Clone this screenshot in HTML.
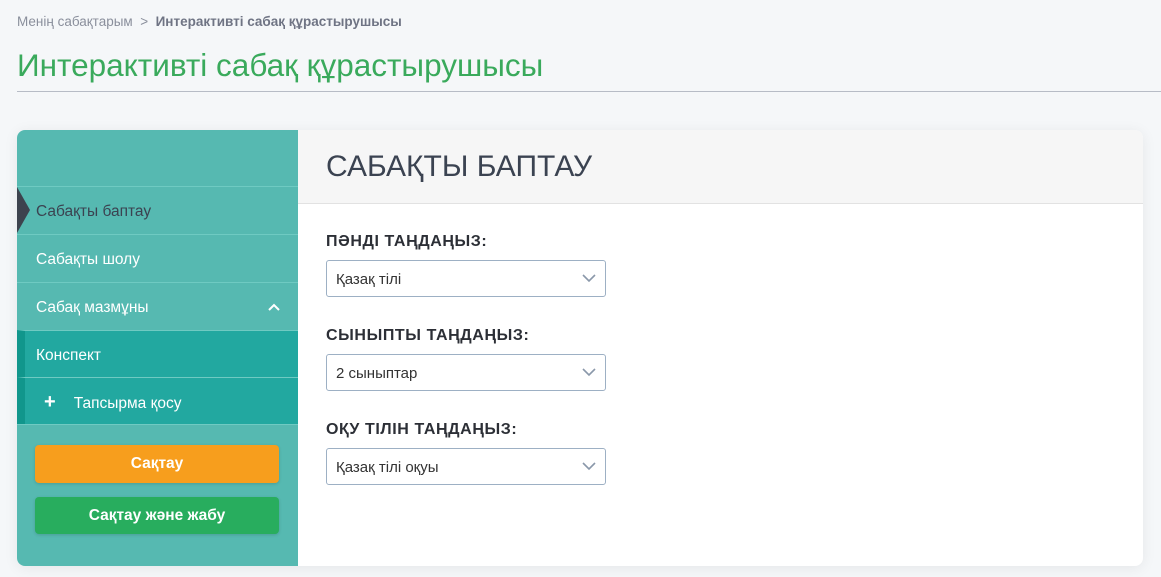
<!DOCTYPE html>
<html><head><meta charset="utf-8"><style>
body{margin:0;width:1161px;height:577px;background:#f5f7f9;font-family:"Liberation Sans","DejaVu Sans",sans-serif;position:relative;overflow:hidden}
.bc{position:absolute;left:17px;top:14px;font-size:13.5px;color:#8a8f9c}
.bc b{color:#6f7484}
h1{position:absolute;left:17px;top:47px;margin:0;font-weight:normal;font-size:31.5px;color:#3aaa5c}
.rule{position:absolute;left:17px;right:0;top:91px;border-top:1px solid #b7bcc6}
.card{position:absolute;left:17px;top:130px;width:1126px;height:436px;border-radius:8px;overflow:hidden;background:#fff;box-shadow:0 2px 14px rgba(0,0,0,.07)}
.side{position:absolute;left:0;top:0;width:281px;height:436px;background:#56b9b1}
.it{position:absolute;left:0;width:281px;height:47px;border-top:1px solid #6fcac2;color:#fff;font-size:15.5px;line-height:49px;padding-left:19px;box-sizing:border-box}
.sub{background:#22a8a0;border-left:8px solid #11968c;padding-left:11px}
.btn{position:absolute;left:18px;width:244px;border-radius:4px;color:#fff;font-weight:bold;font-size:15.5px;text-align:center;box-shadow:0 1px 3px rgba(0,0,0,.15)}
.main{position:absolute;left:281px;top:0;right:0;bottom:0}
.hd{height:73px;background:#f6f6f6;border-bottom:1px solid #e2e2e2;font-size:30px;color:#3b4351;line-height:73px;padding-left:28px}
.lb{position:absolute;left:28px;font-weight:bold;font-size:16px;letter-spacing:0.6px;color:#2c2f36}
.sel{position:absolute;left:28px;width:280px;height:37px;border:1px solid #9db0c4;border-radius:3px;box-sizing:border-box;font-size:15px;color:#333;line-height:38px;padding-left:9px;background:#fff}
.sel svg{position:absolute;right:9px;top:13px}
</style></head><body>
<div class="bc">Менің сабақтарым &nbsp;&gt;&nbsp; <b>Интерактивті сабақ құрастырушысы</b></div>
<h1>Интерактивті сабақ құрастырушысы</h1>
<div class="rule"></div>
<div class="card">
<div class="side">
<div class="it" style="top:56px;color:#3b4351">Сабақты баптау</div>
<div style="position:absolute;left:0;top:57px;width:0;height:0;border-top:23px solid transparent;border-bottom:23px solid transparent;border-left:13px solid #3d434e"></div>
<div class="it" style="top:104px">Сабақты шолу</div>
<div class="it" style="top:152px">Сабақ мазмұны<svg style="position:absolute;right:18px;top:20px" width="12" height="8"><path d="M1 7L6 2L11 7" stroke="#fff" stroke-width="2" fill="none"/></svg></div>
<div class="it sub" style="top:200px">Конспект</div>
<div class="it sub" style="top:247px"><span style="font-size:20px;font-weight:bold;margin:0 18px 0 8px">+</span>Тапсырма қосу</div>
<div style="position:absolute;left:0;top:294px;width:281px;border-top:1px solid #6fcac2"></div>
<div class="btn" style="top:315px;height:38px;line-height:38px;background:#f79e1d">Сақтау</div>
<div class="btn" style="top:367px;height:37px;line-height:37px;background:#28ad5e">Сақтау және жабу</div>
</div>
<div class="main">
<div class="hd">САБАҚТЫ БАПТАУ</div>
<div class="lb" style="top:103px">ПӘНДІ ТАҢДАҢЫЗ:</div>
<div class="sel" style="top:130px">Қазақ тілі<svg width="14" height="9"><path d="M1 1L7 7L13 1" stroke="#8a98aa" stroke-width="1.6" fill="none"/></svg></div>
<div class="lb" style="top:197px">СЫНЫПТЫ ТАҢДАҢЫЗ:</div>
<div class="sel" style="top:224px">2 сыныптар<svg width="14" height="9"><path d="M1 1L7 7L13 1" stroke="#8a98aa" stroke-width="1.6" fill="none"/></svg></div>
<div class="lb" style="top:291px">ОҚУ ТІЛІН ТАҢДАҢЫЗ:</div>
<div class="sel" style="top:318px">Қазақ тілі оқуы<svg width="14" height="9"><path d="M1 1L7 7L13 1" stroke="#8a98aa" stroke-width="1.6" fill="none"/></svg></div>
</div>
</div>
</body></html>
